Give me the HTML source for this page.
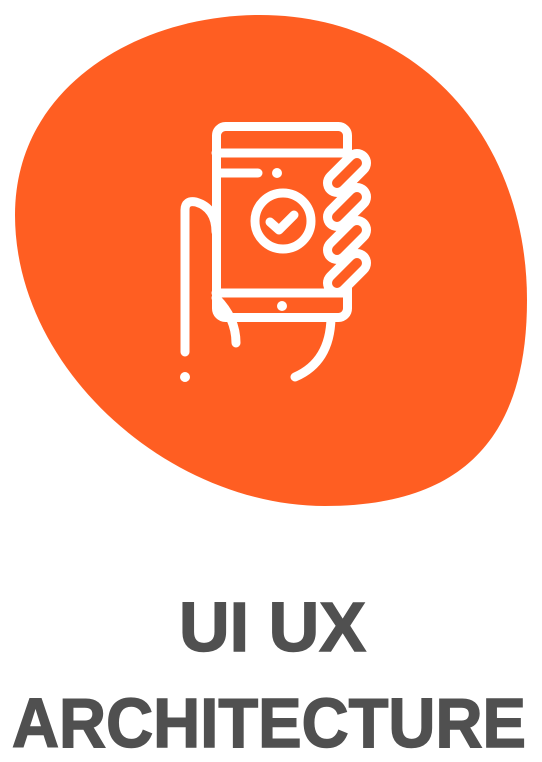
<!DOCTYPE html>
<html><head><meta charset="utf-8"><style>
html,body{margin:0;padding:0;background:#fff;width:542px;height:762px;overflow:hidden}
svg{display:block}
</style></head><body>
<svg width="542" height="762" viewBox="0 0 542 762" xmlns="http://www.w3.org/2000/svg">
<path d="M260,15 C420,15 527,140 527,300 C527,430 470,506 325,506 C170,506 15,370 15,215 C15,85 140,15 260,15 Z" fill="#FF5E22"/>
<g fill="none" stroke="#fff" stroke-width="9" stroke-linecap="round" stroke-linejoin="round">
  <rect x="216.5" y="126.5" width="131" height="191" rx="9"/>
  <line x1="216" y1="153" x2="347" y2="153"/>
  <line x1="216" y1="293" x2="347" y2="293"/>
  <line x1="218" y1="173" x2="258" y2="173"/>
  <circle cx="283" cy="221" r="28"/>
  <polyline points="270,222 279,230 294,215"/>
  <path d="M185,352 V210 Q185,200 196,202 Q216,208 216,232"/>
  <path d="M216,298 Q236,318 236,343"/>
  <path d="M331,318 Q330,362 295,377"/>
</g>
<g fill="#fff">
  <circle cx="277" cy="173" r="5"/>
  <circle cx="282" cy="306" r="5"/>
  <circle cx="185" cy="377" r="5"/>
</g>
<g stroke-linecap="round">
  <g stroke="#fff" stroke-width="28">
    <line x1="337" y1="183" x2="357" y2="163"/>
    <line x1="337" y1="217" x2="357" y2="197"/>
    <line x1="337" y1="250" x2="357" y2="230"/>
    <line x1="337" y1="283" x2="357" y2="263"/>
  </g>
  <g stroke="#FF5E22" stroke-width="10">
    <line x1="337" y1="183" x2="357" y2="163"/>
    <line x1="337" y1="217" x2="357" y2="197"/>
    <line x1="337" y1="250" x2="357" y2="230"/>
    <line x1="337" y1="283" x2="357" y2="263"/>
  </g>
</g>
<g font-family="Liberation Sans, sans-serif" font-weight="bold" font-size="70" fill="#505050" stroke="#505050" stroke-width="1.5">
  <text x="179" y="651" textLength="187" lengthAdjust="spacingAndGlyphs">UI UX</text>
  <text x="12" y="747" textLength="514" lengthAdjust="spacingAndGlyphs">ARCHITECTURE</text>
</g>
</svg>
</body></html>
